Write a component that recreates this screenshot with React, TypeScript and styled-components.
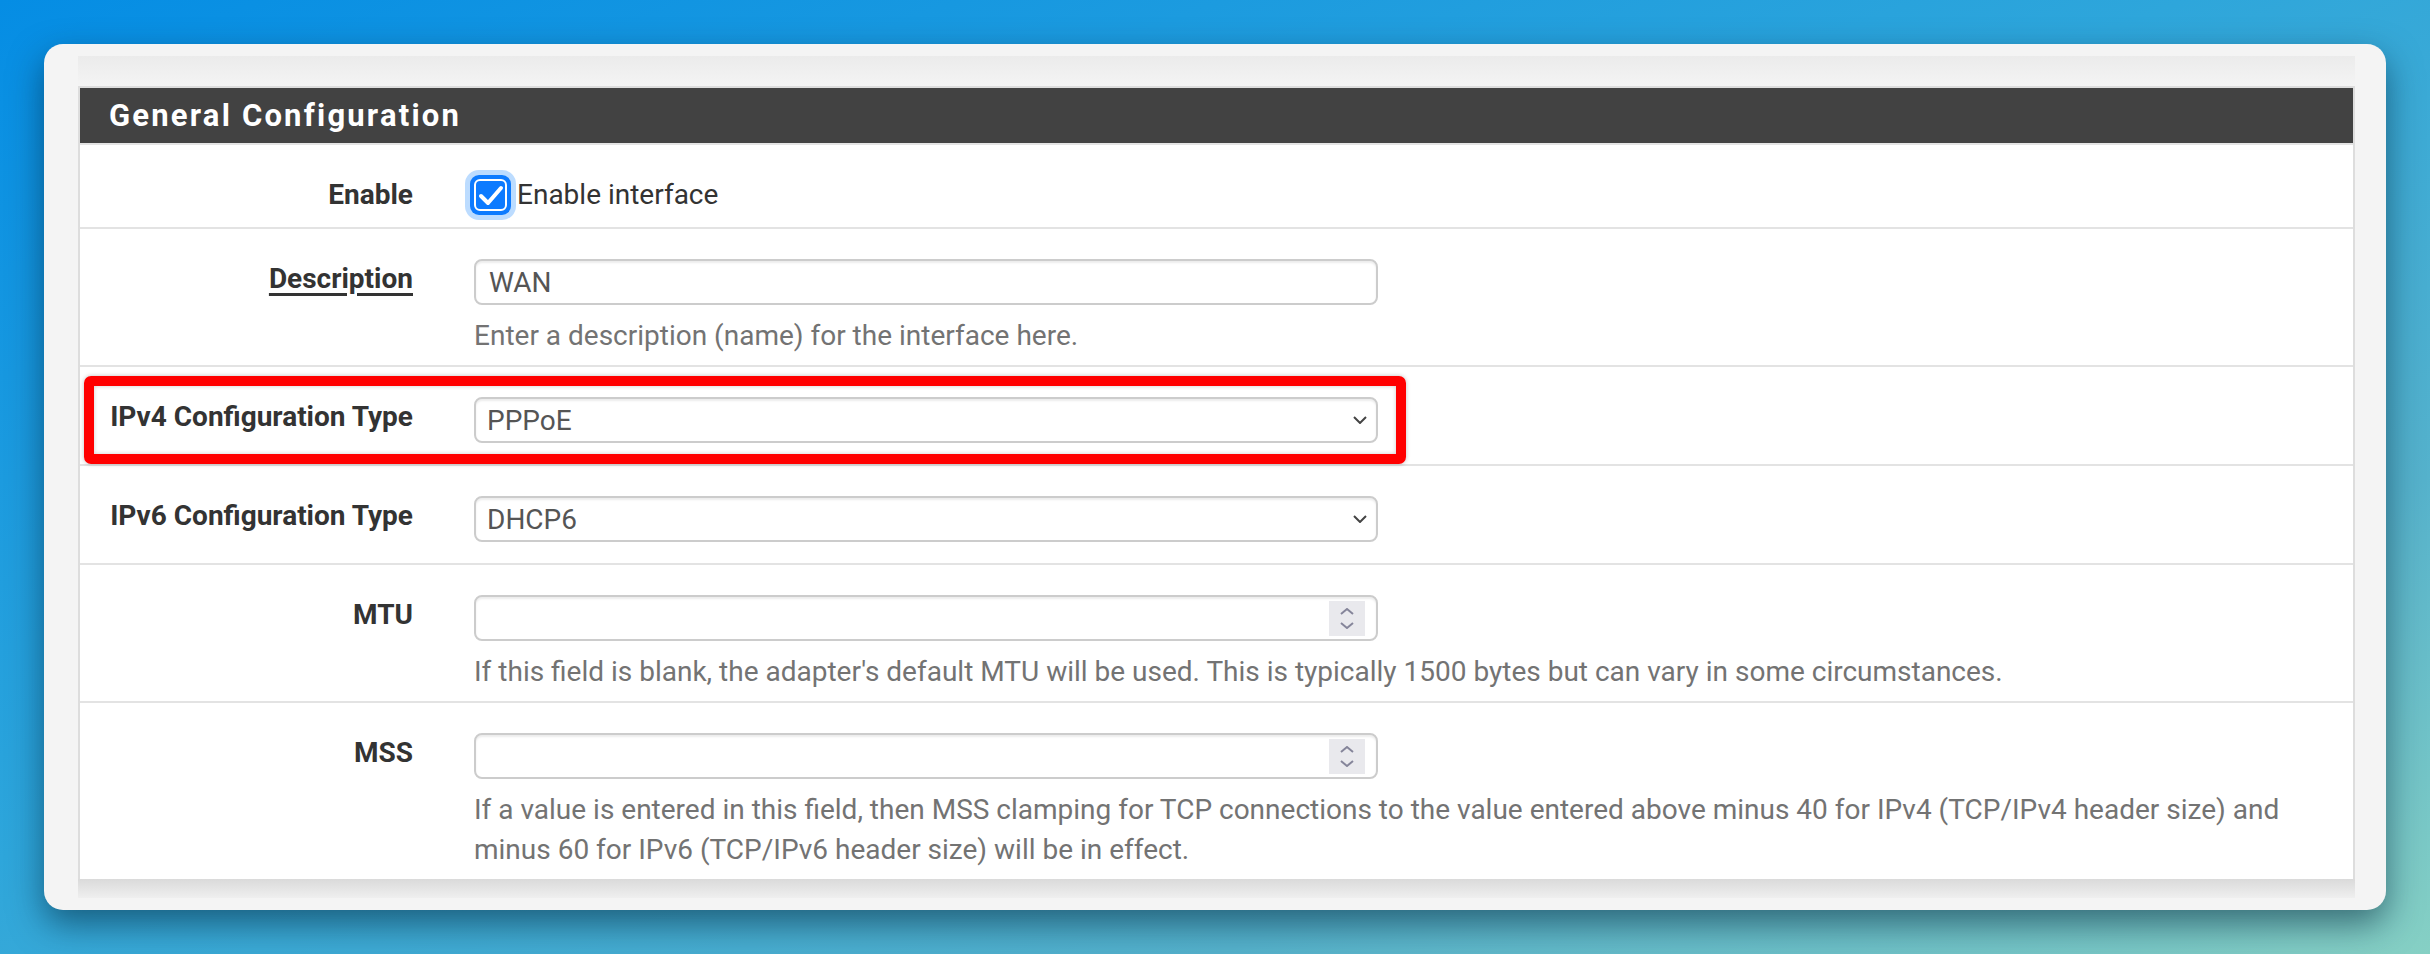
import React from 'react';
import styled, { createGlobalStyle } from 'styled-components';

const GlobalStyle = createGlobalStyle`
  html, body {
    margin: 0;
    padding: 0;
  }
  body {
    width: 2430px;
    height: 954px;
    overflow: hidden;
    background: linear-gradient(to bottom right, #058de4 0%, #2ea6db 45%, #55b2cc 75%, #86d0c4 100%);
    font-family: Roboto, "Liberation Sans", sans-serif;
  }
`;

const App = () => {
  return (
    <Page>
      <GlobalStyle />
      <Card>
        <TopShade />
        <Panel>
          <PanelHeader>
            <PanelTitle>General Configuration</PanelTitle>
          </PanelHeader>

          <Row>
            <Label>Enable</Label>
            <Field $inline>
              <Checkbox>
                <CheckInner>
                  <svg width="40" height="40" viewBox="0 0 40 40">
                    <path d="M10 21 L17 28 L30 13" fill="none" stroke="#fff" strokeWidth="4" strokeLinecap="round" strokeLinejoin="round" />
                  </svg>
                </CheckInner>
              </Checkbox>
              <CheckText>Enable interface</CheckText>
            </Field>
          </Row>

          <Row>
            <Label $link>Description</Label>
            <Field>
              <InputFrame>
                <BareInput defaultValue="WAN" />
              </InputFrame>
              <HelpText>Enter a description (name) for the interface here.</HelpText>
            </Field>
          </Row>

          <Row>
            <Highlight />
            <Label>IPv4 Configuration Type</Label>
            <Field $pad>
              <InputFrame>
                <BareSelect defaultValue="pppoe">
                  <option value="pppoe">PPPoE</option>
                </BareSelect>
                <Chevron width="14" height="8" viewBox="0 0 14 8">
                  <path d="M1 1 L7 7 L13 1" fill="none" stroke="#444" strokeWidth="2" />
                </Chevron>
              </InputFrame>
            </Field>
          </Row>

          <Row>
            <Label>IPv6 Configuration Type</Label>
            <Field $pad>
              <InputFrame>
                <BareSelect defaultValue="dhcp6">
                  <option value="dhcp6">DHCP6</option>
                </BareSelect>
                <Chevron width="14" height="8" viewBox="0 0 14 8">
                  <path d="M1 1 L7 7 L13 1" fill="none" stroke="#444" strokeWidth="2" />
                </Chevron>
              </InputFrame>
            </Field>
          </Row>

          <Row>
            <Label>MTU</Label>
            <Field>
              <InputFrame>
                <BareInput />
                <Spinner />
              </InputFrame>
              <HelpText>
                If this field is blank, the adapter's default MTU will be used. This is typically 1500 bytes but can vary in some circumstances.
              </HelpText>
            </Field>
          </Row>

          <Row $last>
            <Label>MSS</Label>
            <Field>
              <InputFrame>
                <BareInput />
                <Spinner />
              </InputFrame>
              <HelpText>
                If a value is entered in this field, then MSS clamping for TCP connections to the value entered above minus 40 for IPv4 (TCP/IPv4 header size) and minus 60 for IPv6 (TCP/IPv6 header size) will be in effect.
              </HelpText>
            </Field>
          </Row>
        </Panel>
        <BottomShade />
      </Card>
    </Page>
  );
};

const Spinner = () => (
  <SpinBox>
    <svg width="14" height="7" viewBox="0 0 14 7">
      <path d="M1 6 L7 1 L13 6" fill="none" stroke="#85859a" strokeWidth="2" />
    </svg>
    <svg width="14" height="7" viewBox="0 0 14 7">
      <path d="M1 1 L7 6 L13 1" fill="none" stroke="#85859a" strokeWidth="2" />
    </svg>
  </SpinBox>
);

const Page = styled.div`
  box-sizing: border-box;
  height: 954px;
  padding: 44px;
`;

const Card = styled.div`
  background: #f4f4f4;
  border-radius: 19px;
  padding: 12px 31px 12px 34px;
  box-shadow: 0 14px 34px rgba(0, 35, 55, 0.55);
`;

const TopShade = styled.div`
  height: 30px;
  background: linear-gradient(#ebebeb, #f4f4f4);
`;

const BottomShade = styled.div`
  height: 19px;
  background: linear-gradient(#dadada, #efefef);
`;

const Panel = styled.div`
  background: #fff;
  border: 2px solid #dddddd;
  border-bottom: 0;
`;

const PanelHeader = styled.div`
  height: 55px;
  background: #424242;
  border-bottom: 2px solid #e3e3e3;
  display: flex;
  align-items: center;
  padding-left: 29px;
`;

const PanelTitle = styled.h2`
  margin: 0;
  color: #fff;
  font-size: 31px;
  font-weight: 700;
  letter-spacing: 2.2px;
`;

const Row = styled.div<{ $last?: boolean }>`
  position: relative;
  display: grid;
  grid-template-columns: 333px 1fr;
  column-gap: 61px;
  padding: 30px 26px 12px 0;
  border-bottom: ${({ $last }) => ($last ? 'none' : '2px solid #e3e3e3')};
`;

const Label = styled.div<{ $link?: boolean }>`
  text-align: right;
  font-size: 28px;
  font-weight: 700;
  line-height: 40px;
  color: #333;
  ${({ $link }) =>
    $link &&
    `
    text-decoration: underline;
    text-decoration-thickness: 3px;
    text-underline-offset: 5px;
  `}
`;

const Field = styled.div<{ $inline?: boolean; $pad?: boolean }>`
  display: flex;
  flex-direction: ${({ $inline }) => ($inline ? 'row' : 'column')};
  align-items: ${({ $inline }) => ($inline ? 'center' : 'flex-start')};
  padding-bottom: ${({ $pad }) => ($pad ? '9px' : '0')};
`;

const Checkbox = styled.span`
  box-sizing: border-box;
  width: 41px;
  height: 40px;
  border-radius: 9px;
  background: #0d7bff;
  padding: 4px;
  box-shadow: 0 0 0 5px #bcdcff;
  margin-left: -4px;
`;

const CheckInner = styled.span`
  display: flex;
  align-items: center;
  justify-content: center;
  box-sizing: border-box;
  width: 100%;
  height: 100%;
  border: 2px solid #fff;
  border-radius: 6px;
  overflow: hidden;

  svg {
    flex: none;
  }
`;

const CheckText = styled.span`
  margin-left: 6px;
  font-size: 28px;
  line-height: 40px;
  color: #333;
`;

const InputFrame = styled.div`
  box-sizing: border-box;
  width: 904px;
  height: 46px;
  display: flex;
  align-items: center;
  background: #fff;
  border: 2px solid #cccccc;
  border-radius: 8px;
  box-shadow: inset 0 2px 2px rgba(0, 0, 0, 0.075);
`;

const BareInput = styled.input`
  flex: 1;
  min-width: 0;
  height: 100%;
  border: 0;
  outline: 0;
  background: transparent;
  padding: 0 0 0 13px;
  font-family: Roboto, "Liberation Sans", sans-serif;
  font-size: 28px;
  color: #555;
`;

const BareSelect = styled.select`
  flex: 1;
  min-width: 0;
  height: 100%;
  appearance: none;
  border: 0;
  outline: 0;
  background: transparent;
  padding: 0 0 0 11px;
  font-family: Roboto, "Liberation Sans", sans-serif;
  font-size: 28px;
  color: #555;
`;

const Chevron = styled.svg`
  flex: none;
  margin-right: 9px;
`;

const SpinBox = styled.span`
  flex: none;
  width: 36px;
  height: 35px;
  margin-right: 11px;
  background: #e9e9ed;
  display: flex;
  flex-direction: column;
  align-items: center;
  justify-content: center;
  gap: 7px;
`;

const HelpText = styled.div`
  margin: 11px 0 -3px;
  font-size: 28px;
  line-height: 40px;
  color: #737373;
`;

const Highlight = styled.div`
  position: absolute;
  top: 9px;
  left: 4px;
  width: 1322px;
  height: 88px;
  box-sizing: border-box;
  border: 10px solid #ff0000;
  border-radius: 7px;
  box-shadow: 0 0 4px rgba(0, 0, 0, 0.25), inset 0 0 4px rgba(0, 0, 0, 0.2);
  pointer-events: none;
`;

export default App;
